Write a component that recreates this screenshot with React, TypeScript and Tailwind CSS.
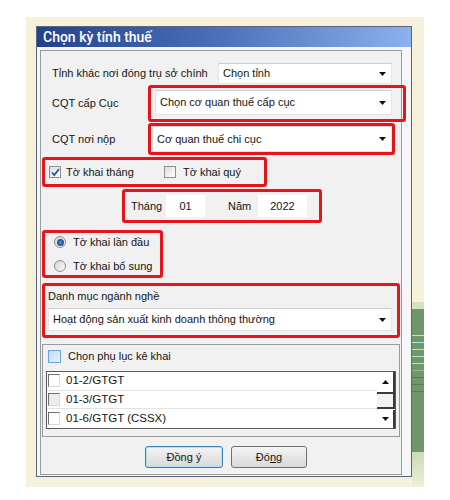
import React from 'react'

const txt = "font-['Liberation_Sans',Arial,sans-serif] text-[11px] text-[#141414]"

const Arrow = ({ up = false }: { up?: boolean }) => (
  <svg width="7" height="4" viewBox="0 0 7 4" className={up ? 'rotate-180' : ''}>
    <path d="M0 0h7L3.5 4z" fill="#111" />
  </svg>
)

const Combo = ({ text, className = '' }: { text: string; className?: string }) => (
  <div
    className={`flex items-center justify-between bg-white border border-[#e4e4e4] border-t-[#cdcdcd] pl-[4px] pr-[5px] ${className}`}
  >
    <span>{text}</span>
    <Arrow />
  </div>
)

const RedBox = ({ className = '', children }: { className?: string; children?: React.ReactNode }) => (
  <div className={`shrink-0 border-[3px] border-[#e8141c] rounded-[3px] ${className}`}>{children}</div>
)

const Check = ({ checked = false }: { checked?: boolean }) => (
  <div className="w-[12px] h-[12px] border border-[#8e8f8f] bg-linear-to-br from-[#dcdcdc] to-white flex items-center justify-center shrink-0">
    {checked && (
      <svg width="9" height="9" viewBox="0 0 9 9">
        <path d="M1 4.5l2.3 2.6L8 1" stroke="#2457a8" strokeWidth="1.8" fill="none" />
      </svg>
    )}
  </div>
)

const Radio = ({ checked = false }: { checked?: boolean }) => (
  <div className="w-[12px] h-[12px] rounded-full border border-[#8e8f8f] bg-linear-to-br from-[#d4d4d4] to-[#fbfbfb] flex items-center justify-center shrink-0">
    {checked && (
      <div className="w-[7px] h-[7px] rounded-full bg-radial from-[#4f93dc] to-[#0a2c68]" />
    )}
  </div>
)

const ClassicCheck = ({ gray = false }: { gray?: boolean }) => (
  <div
    className={`w-[12px] h-[13px] border border-t-[#6f6f6f] border-l-[#6f6f6f] border-r-[#d8d8d8] border-b-[#d8d8d8] shrink-0 ${gray ? 'bg-[#ececec]' : 'bg-white'}`}
  />
)

const rows = ['01-2/GTGT', '01-3/GTGT', '01-6/GTGT (CSSX)']

const App = () => (
  <div className="w-[450px] h-[500px] bg-white pt-[17px] pl-[26px]">
    <div className="w-[398px] h-[470px] bg-[#f7f0da] flex pt-[9px] pl-[10px]">
      <div className={`w-[376px] h-[451px] flex flex-col border border-[#59657d] bg-[#f6f6f6] ${txt}`}>
        <div className="h-[20px] shrink-0 bg-linear-to-r from-[#23428a] via-[#4c72bb] to-[#8cb1ed] flex items-center pl-[6px]">
          <span className="font-['Roboto',Arial,sans-serif] font-medium text-[14px] text-white">Chọn kỳ tính thuế</span>
        </div>

        <div className="ml-[3px] mt-[3px] w-[362px] h-[425px] border border-[#9a9a9a] bg-[#f1f1f1] flex flex-col">
          <div className="mt-[12px] h-[21px] flex items-center">
            <div className="w-[177px] pl-[11px] shrink-0">Tỉnh khác nơi đóng trụ sở chính</div>
            <Combo text="Chọn tỉnh" className="w-[174px] h-[21px]" />
          </div>

          <div className="mt-[1px] h-[37px] flex items-center">
            <div className="w-[107px] pl-[11px] shrink-0">CQT cấp Cục</div>
            <RedBox className="w-[258px] h-[37px] pl-[4px] pt-[2px]">
              <Combo text="Chọn cơ quan thuế cấp cục" className="w-[237px] h-[25px]" />
            </RedBox>
          </div>

          <div className="mt-[1px] h-[32px] flex items-center">
            <div className="w-[107px] pl-[11px] shrink-0">CQT nơi nộp</div>
            <RedBox className="w-[247px] h-[32px] pl-[1px]">
              <Combo text="Cơ quan thuế chi cục" className="w-[240px] h-[26px]" />
            </RedBox>
          </div>

          <RedBox className="mt-[2px] ml-[1px] w-[225px] h-[30px] flex items-center pl-[4px]">
            <Check checked />
            <span className="ml-[5px] w-[98px]">Tờ khai tháng</span>
            <Check />
            <span className="ml-[7px]">Tờ khai quý</span>
          </RedBox>

          <RedBox className="mt-[2px] ml-[81px] w-[200px] h-[34px] flex items-center pl-[6px]">
            <span className="w-[35px]">Tháng</span>
            <div className="w-[39px] h-[22px] bg-white flex items-center justify-center">01</div>
            <span className="ml-[23px] w-[30px]">Năm</span>
            <div className="w-[49px] h-[22px] bg-white flex items-center justify-center">2022</div>
          </RedBox>

          <RedBox className="mt-[7px] ml-[1px] w-[121px] h-[48px] flex flex-col justify-center gap-[11px] pl-[9px]">
            <div className="flex items-center gap-[7px] h-[13px]">
              <Radio checked />
              <span>Tờ khai lần đầu</span>
            </div>
            <div className="flex items-center gap-[7px] h-[13px]">
              <Radio />
              <span>Tờ khai bổ sung</span>
            </div>
          </RedBox>

          <RedBox className="mt-[5px] ml-[1px] w-[358px] h-[55px] pl-[3px] pt-[3px]">
            <div className="h-[15px] flex items-center">Danh mục ngành nghề</div>
            <Combo text="Hoạt động sản xuất kinh doanh thông thường" className="mt-[4px] w-[344px] h-[23px]" />
          </RedBox>

          <div className="mt-[6px] ml-[1px] w-[358px] h-[93px] shrink-0 border border-[#9a9a9a] flex flex-col">
            <div className="mt-[5px] ml-[5px] h-[12px] flex items-center gap-[7px]">
              <div className="w-[13px] h-[13px] border border-[#6aa6dc] bg-linear-to-br from-[#bcdcf6] to-[#e6f3fc]" />
              <span>Chọn phụ lục kê khai</span>
            </div>
            <div className="mt-[9px] ml-[3px] w-[350px] h-[58px] border border-[#5a5a5a] bg-white flex">
              <div className="flex-1 flex flex-col">
                {rows.map((r, i) => (
                  <div
                    key={r}
                    className={`h-[19px] flex items-center gap-[6px] pl-[1px] ${i < 2 ? 'border-b border-[#e2e2e2]' : ''}`}
                  >
                    <ClassicCheck gray={i === 1} />
                    <span className="text-[11.5px]">{r}</span>
                  </div>
                ))}
              </div>
              <div className="w-[18px] flex flex-col bg-[#fafafa]">
                <div className="h-[22px] bg-white border-r-2 border-b-2 border-[#3a3a3a] flex items-center justify-center">
                  <Arrow up />
                </div>
                <div className="h-[15px] bg-[#f2f2f2] border-r-2 border-b-2 border-[#3a3a3a]" />
                <div className="flex-1 mt-[1px] bg-white border-r-2 border-[#3a3a3a] flex items-center justify-center">
                  <Arrow />
                </div>
              </div>
            </div>
          </div>

          <div className="mt-[9px] h-[22px] flex gap-[8px] pl-[104px]">
            <div className="w-[78px] h-[22px] rounded-[3px] border border-[#3c7fb1] bg-linear-to-b from-[#f4f4f4] to-[#d9d9d9] flex items-center justify-center shadow-[inset_0_0_0_1px_#b5def7]">
              <span>
                Đồn<span className="underline">g</span> ý
              </span>
            </div>
            <div className="w-[76px] h-[22px] rounded-[3px] border border-[#707070] bg-linear-to-b from-[#f4f4f4] to-[#d9d9d9] flex items-center justify-center">
              <span>
                Đó<span className="underline">ng</span>
              </span>
            </div>
          </div>
        </div>
      </div>

      <div className="w-[12px] flex flex-col">
        <div className="h-[276px] bg-[#f7f0da]" />
        <div className="h-[7px] bg-[#d3e3bd]" />
        <div className="h-[143px] bg-[#6f9769] flex flex-col pt-[26px] gap-[6px]">
          <div className="h-[1px] bg-[#a8eadf]" />
          <div className="h-[1px] bg-[#a8eadf]" />
          <div className="h-[1px] bg-[#a8eadf]" />
          <div className="h-[1px] bg-[#a8eadf]" />
          <div className="h-[1px] bg-[#a8eadf]" />
          <div className="h-[1px] bg-[#8fb88a]" />
          <div className="h-[1px] bg-[#5b7d56]" />
          <div className="h-[1px] bg-[#5b7d56]" />
          <div className="h-[1px] bg-[#5b7d56]" />
        </div>
        <div className="flex-1 bg-linear-to-b from-[#c9dcb4] to-[#eef0d8]" />
      </div>
    </div>
  </div>
)

export default App
